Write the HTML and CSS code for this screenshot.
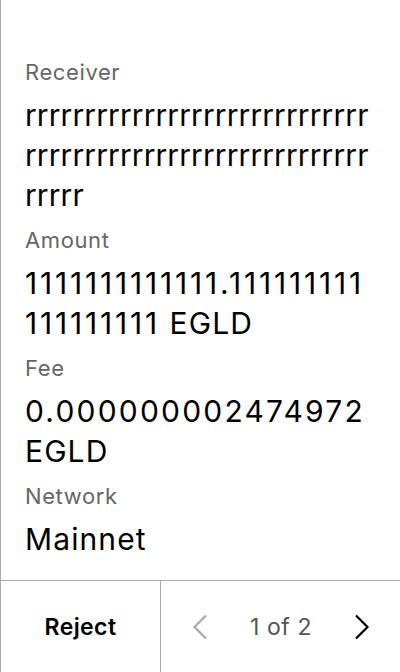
FILE: index.html
```html
<!DOCTYPE html>
<html>
<head>
<meta charset="utf-8">
<link rel="stylesheet" href="styles.css">
</head>
<body>
<div class="screen">
  <main class="details">
    <div class="field">
      <div class="label">Receiver</div>
      <div class="value addr">rrrrrrrrrrrrrrrrrrrrrrrrrrrrrrrrrrrrrrrrrrrrrrrrrrrrrrrrrrrrrrr</div>
    </div>
    <div class="field">
      <div class="label">Amount</div>
      <div class="value"><span class="num">1111111111111.111111111111111111</span> EGLD</div>
    </div>
    <div class="field">
      <div class="label">Fee</div>
      <div class="value"><span class="num fee">0.000000002474972</span> EGLD</div>
    </div>
    <div class="field">
      <div class="label">Network</div>
      <div class="value">Mainnet</div>
    </div>
  </main>
  <footer class="footer">
    <button class="reject">Reject</button>
    <div class="pager">
      <svg class="chev chev-prev" width="16" height="26" viewBox="0 0 16 26"><path d="M14 1.5 L2.5 13 L14 24.5" fill="none" stroke="#aaaaaa" stroke-width="2.2"/></svg>
      <span class="count">1 of 2</span>
      <svg class="chev chev-next" width="16" height="26" viewBox="0 0 16 26"><path d="M2 1.5 L13.5 13 L2 24.5" fill="none" stroke="#000000" stroke-width="2.2"/></svg>
    </div>
  </footer>
</div>
</body>
</html>
```

FILE: styles.css
```css
* { box-sizing: border-box; }
html, body { margin: 0; padding: 0; background: #ffffff; }
body { font-family: Inter, "Noto Sans", sans-serif; color: #000; }
.screen {
  width: 400px;
  height: 672px;
  border-left: 1px solid #aaaaaa;
  display: flex;
  flex-direction: column;
}
.details {
  flex: 1;
  padding: 58px 24px 0 24px;
  display: flex;
  flex-direction: column;
  gap: 11px;
}
.field { display: flex; flex-direction: column; gap: 9px; }
.label {
  font-size: 22px;
  line-height: 28px;
  letter-spacing: 0.6px;
  color: #666666;
}
.value {
  font-size: 30px;
  line-height: 40px;
  letter-spacing: 1.1px;
  color: #000;
  overflow-wrap: anywhere;
}
.value.addr { letter-spacing: 0.1px; }
.num { letter-spacing: 2.8px; }
.num.fee { letter-spacing: 2.2px; }
.footer {
  height: 92px;
  border-top: 1px solid #aaaaaa;
  display: flex;
}
.reject {
  width: 160px;
  border: none;
  border-right: 1px solid #aaaaaa;
  background: none;
  font-family: inherit;
  font-size: 23px;
  font-weight: 600;
  letter-spacing: 0.4px;
  color: #000;
  padding: 0;
}
.pager {
  flex: 1;
  display: flex;
  align-items: center;
  justify-content: space-between;
  padding: 0 30px 0 31px;
}
.count {
  font-size: 23px;
  letter-spacing: 0.6px;
  color: #555555;
}
.chev { display: block; }
```
